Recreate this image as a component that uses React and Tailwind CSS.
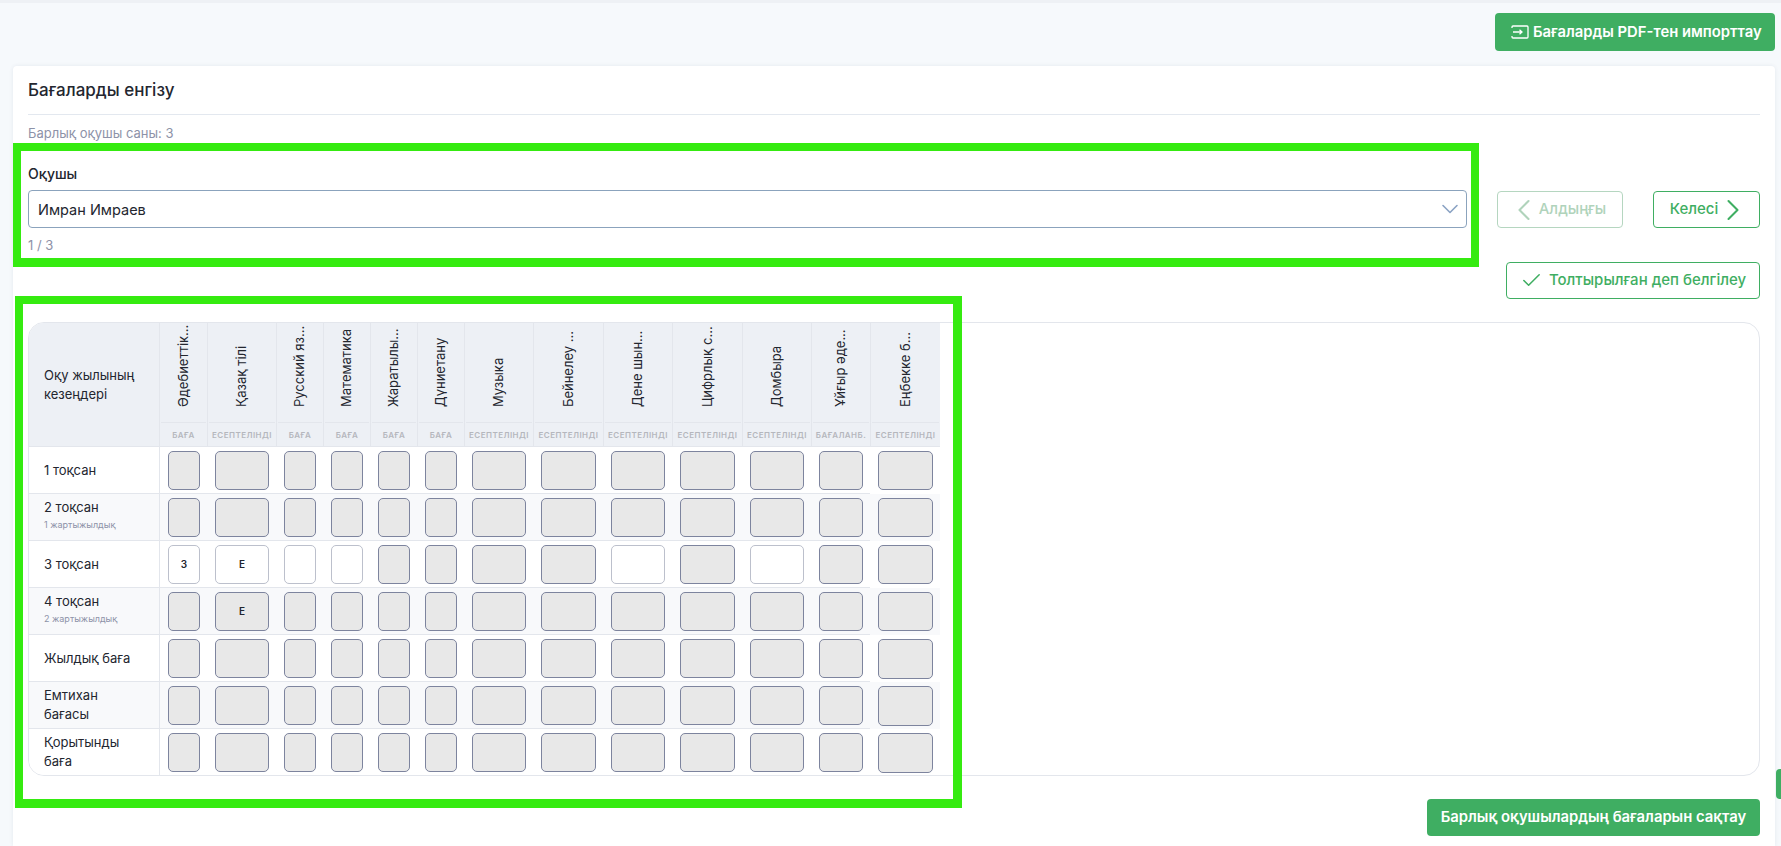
import React from 'react';
import { ChevronDown, ChevronLeft, ChevronRight, Check } from 'lucide-react';

const columns = [
  { name: 'Әдебиеттік...', sub: 'БАҒА', width: 'w-[47px]' },
  { name: 'Қазақ тілі', sub: 'ЕСЕПТЕЛІНДІ', width: 'w-[69px]' },
  { name: 'Русский яз...', sub: 'БАҒА', width: 'w-[47px]' },
  { name: 'Математика', sub: 'БАҒА', width: 'w-[47px]' },
  { name: 'Жаратылы...', sub: 'БАҒА', width: 'w-[47px]' },
  { name: 'Дүниетану', sub: 'БАҒА', width: 'w-[47px]' },
  { name: 'Музыка', sub: 'ЕСЕПТЕЛІНДІ', width: 'w-[69px]' },
  { name: 'Бейнелеу ...', sub: 'ЕСЕПТЕЛІНДІ', width: 'w-[70px]' },
  { name: 'Дене шын...', sub: 'ЕСЕПТЕЛІНДІ', width: 'w-[69px]' },
  { name: 'Цифрлық с...', sub: 'ЕСЕПТЕЛІНДІ', width: 'w-[70px]' },
  { name: 'Домбыра', sub: 'ЕСЕПТЕЛІНДІ', width: 'w-[69px]' },
  { name: 'Ұйғыр әде...', sub: 'БАҒАЛАНБ.', width: 'w-[59px]' },
  { name: 'Еңбекке б...', sub: 'ЕСЕПТЕЛІНДІ', width: 'w-[70px]' },
];

const rows = [
  { title: ['1 тоқсан'], enabled: [], values: {} },
  { title: ['2 тоқсан'], sub: '1 жартыжылдық', enabled: [], values: {} },
  { title: ['3 тоқсан'], enabled: [0, 1, 2, 3, 8, 10], values: { 0: 'З', 1: 'Е' } },
  { title: ['4 тоқсан'], sub: '2 жартыжылдық', enabled: [], values: { 1: 'Е' } },
  { title: ['Жылдық баға'], enabled: [], values: {} },
  { title: ['Емтихан', 'бағасы'], enabled: [], values: {} },
  { title: ['Қорытынды', 'баға'], enabled: [], values: {} },
];

const OutlineButton = ({ className = '', children }) => (
  <button className={`flex items-center justify-center rounded-[4px] border text-[15px] font-medium ${className}`}>
    {children}
  </button>
);

const GradesTable = () => (
  <div className="h-[454px] overflow-hidden rounded-2xl border border-[#e3e6ec]">
    <table className="w-[911px] table-fixed border-separate border-spacing-0">
      <thead>
        <tr className="bg-[#edf0f5]">
          <th className="h-[124px] w-[131px] border-r border-b border-[#e3e6ec] pr-2 pl-[15px] text-left text-[13px] leading-[19px] font-normal text-[#23262f]">
            Оқу жылының<br />кезеңдері
          </th>
          {columns.map((col, c) => (
            <th key={col.name} className={`${col.width} h-[124px] border-b border-[#e3e6ec] p-0 font-normal ${c === 0 ? '' : 'border-l'}`}>
              <div className="flex h-[123px] flex-col">
                <div className="mx-[1px] flex h-[100px] items-start justify-center border-b border-[#e3e6ec]">
                  <span className="flex h-[84px] rotate-180 items-center justify-start text-[13px] whitespace-nowrap text-[#23262f] [writing-mode:vertical-rl]">
                    {col.name}
                  </span>
                </div>
                <div className="flex flex-1 items-center justify-center text-[8px] font-semibold tracking-[0.45px] whitespace-nowrap text-[#b5b7bd]">
                  {col.sub}
                </div>
              </div>
            </th>
          ))}
        </tr>
      </thead>
      <tbody>
        {rows.map((row, r) => (
          <tr key={r} className={r % 2 === 1 ? 'bg-[#f8f9fb]' : 'bg-white'}>
            <td className="h-[47px] border-r border-b border-[#e3e6ec] pr-2 pl-[15px] text-[13px] leading-[19px] text-[#23262f]">
              {row.title.map((line) => (
                <div key={line}>{line}</div>
              ))}
              {row.sub && <div className="mb-[3px] text-[9px] leading-[16px] text-[#8d92a8]">{row.sub}</div>}
            </td>
            {columns.map((col, c) => {
              const enabled = row.enabled.includes(c);
              const isLast = c === columns.length - 1;
              return (
                <td key={col.name} className={`h-[47px] border-b pt-[1px] pr-[7px] pl-2 ${isLast ? 'border-transparent' : 'border-[#e3e6ec]'}`}>
                  <div className={`flex w-full items-center justify-center rounded-[5px] border text-[10px] font-semibold text-[#23262f] ${isLast && r >= 4 ? 'h-[40px]' : 'h-[39px]'} ${enabled ? 'border-[#bcc0cc] bg-white' : 'border-[#7d849e] bg-[#e8e8e8]'}`}>
                    {row.values[c]}
                  </div>
                </td>
              );
            })}
          </tr>
        ))}
      </tbody>
    </table>
  </div>
);

export default function App() {
  return (
    <div className="relative h-[846px] overflow-hidden bg-[#f6f9fc] font-['Inter',sans-serif]">
      <div className="h-[3px] bg-[#eef1f5]" />
      <div className="flex justify-end pt-[10px] pr-[6px]">
        <button className="flex h-[38px] w-[280px] items-center gap-[4px] rounded-[4px] bg-[#3fae62] pl-[16px] text-[14.8px] font-semibold text-white">
          <svg width="18" height="14" viewBox="0 0 18 14" fill="none" stroke="currentColor" strokeWidth="1.3">
            <path d="M1 3V2a1 1 0 0 1 1-1h14a1 1 0 0 1 1 1v10a1 1 0 0 1-1 1H2a1 1 0 0 1-1-1v-1" />
            <path d="M2 7h9M8.5 4.8 11 7l-2.5 2.2" />
          </svg>
          Бағаларды PDF-тен импорттау
        </button>
      </div>

      <div className="mt-[15px] mr-[6px] ml-[13px] h-[780px] rounded-t-[4px] bg-white px-[15px] shadow-[0_0_4px_rgba(30,50,90,0.08)]">
        <div className="flex h-[49px] items-center border-b border-[#e3e8ef] pt-[2px] text-[17px] font-medium text-[#23262f]">
          Бағаларды енгізу
        </div>
        <div className="pt-[9px] text-[13px] leading-[18px] text-[#8d92a8]">Барлық оқушы саны: 3</div>

        <div className="mt-[24px] flex items-start">
          <div className="w-[1439px]">
            <div className="text-[14px] leading-[16px] font-medium text-[#23262f]">Оқушы</div>
            <div className="mt-[8px] flex h-[38px] items-center justify-between rounded-[4px] border border-[#8ba3bd] pr-[2px] pl-[9px] text-[14.5px] text-[#23262f]">
              <span className="pt-[1px]">Имран Имраев</span>
              <ChevronDown size={28} strokeWidth={1.4} className="text-[#8ba3c4]" />
            </div>
            <div className="mt-[8px] text-[13px] leading-[18px] text-[#8d92a8]">1 / 3</div>
          </div>
          <div className="mt-[25px] ml-[30px] flex gap-[30px]">
            <OutlineButton className="h-[37px] w-[126px] border-[#b5d6c0] text-[#b0d3bb]">
              <ChevronLeft size={36} strokeWidth={1.4} className="-mr-[3px] -ml-[8px]" />
              Алдыңғы
            </OutlineButton>
            <OutlineButton className="h-[37px] w-[107px] border-[#3fae62] text-[#3fae62]">
              Келесі
              <ChevronRight size={36} strokeWidth={1.4} className="-mr-[8px] -ml-[3px]" />
            </OutlineButton>
          </div>
        </div>

        <div className="mt-[8px] flex justify-end">
          <OutlineButton className="h-[37px] w-[254px] gap-[6px] border-[#3fae62] text-[#3fae62]">
            <Check size={23} strokeWidth={1.6} />
            Толтырылған деп белгілеу
          </OutlineButton>
        </div>

        <div className="mt-[23px]">
          <GradesTable />
        </div>

        <div className="mt-[23px] flex justify-end">
          <button className="h-[37px] w-[333px] rounded-[4px] bg-[#3fae62] text-[14.8px] font-semibold text-white">
            Барлық оқушылардың бағаларын сақтау
          </button>
        </div>
      </div>

      {/* highlight frames drawn over the page */}
      <div className="pointer-events-none absolute top-[143px] left-[13px] h-[124px] w-[1466px] border-[8px] border-b-[9px] border-[#35eb10]" />
      <div className="pointer-events-none absolute top-[296px] left-[15px] h-[512px] w-[947px] border-[8px] border-r-[9px] border-b-[9px] border-[#35eb10]" />
      <div className="absolute top-[769px] right-0 h-[30px] w-[5px] rounded-l-[4px] bg-[#3fae62]" />
    </div>
  );
}
